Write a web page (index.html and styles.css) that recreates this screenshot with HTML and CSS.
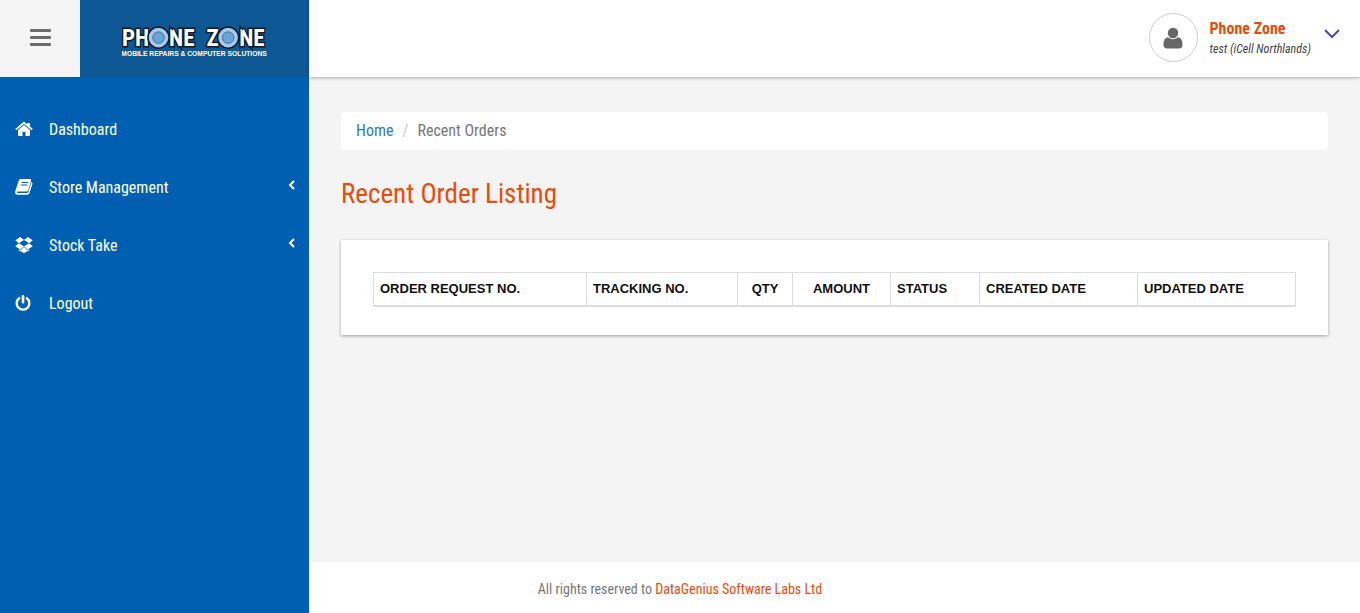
FILE: index.html
```html
<!DOCTYPE html>
<html lang="en">
<head>
<meta charset="utf-8">
<meta name="viewport" content="width=device-width, initial-scale=1">
<title>Recent Orders</title>
<link rel="stylesheet" href="styles.css">
</head>
<body>
<div class="app">
  <aside class="sidebar">
    <div class="brand">
      <button class="menu-toggle" type="button" aria-label="Toggle menu">
        <svg width="22" height="18" viewBox="0 0 22 18" fill="#6b6b6b"><rect width="21" height="3" rx="1" x="1" y="0"/><rect width="21" height="3" rx="1" x="1" y="7"/><rect width="21" height="3" rx="1" x="1" y="14"/></svg>
      </button>
      <a class="logo" href="#" aria-label="Phone Zone">
        <svg width="146" height="35" viewBox="0 0 152 36">
          <g class="logo-name">
            <text x="0" y="24">PH</text><text x="49" y="24">NE</text>
            <text x="88" y="24">Z</text><text x="122" y="24">NE</text>
          </g>
          <path d="m49 2 4 5M60 24l3 4M122 2l4 5M133 24l3 4" fill="none" stroke="#0b1a2a" stroke-width="1.500"/>
          <g fill="#a4caee" stroke="#0b1a2a" stroke-width="1.500">
            <circle cx="38" cy="15" r="11"/><circle cx="110.500" cy="15" r="11"/>
          </g>
          <g fill="#6ba3d6" stroke="#3c6f9f">
            <circle cx="38" cy="15" r="6"/><circle cx="110.500" cy="15" r="6"/>
          </g>
          <text class="logo-tag" x="75" y="34">MOBILE REPAIRS &amp; COMPUTER SOLUTIONS</text>
        </svg>
      </a>
    </div>
    <nav class="nav">
      <a href="#">
        <svg class="icon" viewBox="0 0 18 16" fill="#fff"><path d="M9 4 3 9v5q0 1 1 1h3.500v-4h3v4H14q1 0 1-1V9z"/><path d="m9 .6 3 2.500V2h3v3.600l2.800 2.400-1.100 1.300L9 3.100 1.300 9.300.2 8z"/></svg>
        <span>Dashboard</span>
      </a>
      <a href="#">
        <svg class="icon" viewBox="0 0 18 16"><path fill="#fff" fill-rule="evenodd" d="M6 0h9q1.500 0 1.100 1.500L13.300 11q-.4 1.500-2 1.500H3q-1.200 0-1.200.8.100.8 1.200.8h9q1 0 1.300-1L16.300 3q1.500.6 1.100 2L14.500 14q-.5 1.800-2.300 1.800H2.500Q0 15.800 0 13.500q0-.8.300-1.500L3.600 2Q4.200 0 6 0zm.8 3-.3 1h6.400l.3-1zM6 5.500l-.3 1h6.400l.3-1z"/></svg>
        <span>Store Management</span>
        <svg class="arrow" viewBox="0 0 8 12"><path d="M6 2 2 6l4 4"/></svg>
      </a>
      <a href="#">
        <svg class="icon" viewBox="0 0 18 16" fill="#fff"><path d="m5.300 0 3.700 3-5.200 3.300L.3 3.300zM12.700 0 9 3l5.200 3.300 3.500-3zM3.800 6.300.3 9.200l5 3.200L9 9.300zM14.200 6.300l3.500 2.900-5 3.200L9 9.300zM9 10.100l-3.700 3.100-1.600-1v1.200L9 16l5.300-2.600v-1.200l-1.600 1z"/></svg>
        <span>Stock Take</span>
        <svg class="arrow" viewBox="0 0 8 12"><path d="M6 2 2 6l4 4"/></svg>
      </a>
      <a href="#">
        <svg class="icon" viewBox="0 0 18 16" fill="none" stroke="#fff" stroke-linecap="round"><path stroke-width="2.400" d="M4.200 3.300a6.300 6.300 0 1 0 7.600 0"/><path stroke-width="2.600" d="M8 1.300V7.300"/></svg>
        <span>Logout</span>
      </a>
    </nav>
  </aside>

  <div class="page">
    <header class="topbar">
      <span class="avatar">
        <svg width="20" height="22" viewBox="0 0 20 22" fill="#666"><circle cx="10" cy="6" r="5.200"/><path d="M5 10.200q5 4 10 0 4.500.6 4.500 7.500 0 3.800-3.500 3.800H4q-3.500 0-3.500-3.800Q.5 10.800 5 10.200z"/></svg>
      </span>
      <div class="user">
        <strong>Phone Zone</strong>
        <em>test (iCell Northlands)</em>
      </div>
      <button class="user-menu" type="button" aria-label="Account menu">
        <svg width="16" height="10" viewBox="0 0 16 10" fill="none" stroke="#4f46b8" stroke-width="2"><path d="m1 1 7 7 7-7"/></svg>
      </button>
    </header>

    <main class="content">
      <nav class="breadcrumb" aria-label="Breadcrumb">
        <a href="#">Home</a><span class="slash">/</span><span>Recent Orders</span>
      </nav>
      <h1>Recent Order Listing</h1>
      <section class="card">
        <table class="orders">
          <colgroup><col class="c-order"><col class="c-track"><col class="c-qty"><col class="c-amount"><col class="c-status"><col class="c-date"><col class="c-date"></colgroup>
          <thead>
            <tr><th>ORDER REQUEST NO.</th><th>TRACKING NO.</th><th class="center">QTY</th><th class="center">AMOUNT</th><th>STATUS</th><th>CREATED DATE</th><th>UPDATED DATE</th></tr>
          </thead>
        </table>
      </section>
    </main>

    <footer class="footer">
      <p>All rights reserved to <a href="#">DataGenius Software Labs Ltd</a></p>
    </footer>
  </div>
</div>
</body>
</html>
```
FILE: styles.css
```css
* { box-sizing: border-box; }

body {
  margin: 0;
  background: #f4f4f4;
  color: #777;
  font: 16px/24px "Roboto Condensed", "Liberation Sans Narrow", Roboto, sans-serif;
}

a { color: inherit; text-decoration: none; }
button { border: 0; padding: 0; background: none; cursor: pointer; }
svg { display: block; }

.app { display: grid; grid-template-columns: 309px 1fr; min-height: 100vh; }

.sidebar { background: #005fb0; color: #fff; }
.brand { display: grid; grid-template-columns: 80px 1fr; height: 77px; }
.menu-toggle { display: grid; place-items: center; padding-bottom: 2px; background: #f5f5f5; }
.logo { display: grid; place-items: center; padding-top: 3px; background: #0e5896; }
.logo-name {
  font: bold 24px "Roboto Condensed", "Liberation Sans Narrow", sans-serif;
  fill: #fff;
  stroke: #0b1a2a;
  stroke-width: 3px;
  paint-order: stroke;
}
.logo-tag { font: bold 7px "Liberation Sans", sans-serif; fill: #fff; text-anchor: middle; }

.nav { display: flex; flex-direction: column; padding-top: 24px; }
.nav a { display: flex; align-items: center; gap: 16px; height: 58px; padding: 0 13px 0 15px; }
.icon { width: 18px; height: 16px; margin-bottom: 2px; }
.arrow { width: 8px; height: 12px; margin-left: auto; margin-bottom: 6px; fill: none; stroke: #fff; stroke-width: 2px; }

.page { display: flex; flex-direction: column; min-width: 0; }
.topbar {
  display: flex;
  align-items: center;
  justify-content: flex-end;
  height: 77px;
  padding: 0 20px 2px 0;
  background: #fff;
  box-shadow: 0 1px 3px rgba(0, 0, 0, .3);
}
.avatar {
  display: grid;
  place-items: center;
  width: 49px;
  height: 49px;
  margin-right: 12px;
  border: 1px solid #ccc;
  border-radius: 50%;
}
.user { display: flex; flex-direction: column; padding-top: 2px; line-height: 20px; }
.user strong { color: #e84c0d; }
.user em { color: #444; font-size: 12px; }
.user-menu { margin: 0 0 8px 13px; }

.content { flex: 1; padding: 35px 32px; }
.breadcrumb { display: flex; gap: 9px; padding: 7px 15px; border-radius: 4px; background: #fff; }
.breadcrumb a { color: #337ab7; }
.slash { color: #ccc; }
h1 { margin: 26px 0 28px; color: #e84c0d; font-size: 27px; line-height: 36px; font-weight: 400; }
.card { padding: 32px 32px 28px; background: #fff; box-shadow: 0 1px 3px rgba(0, 0, 0, .35); }
.orders { width: 100%; table-layout: fixed; border-collapse: collapse; }
.orders th {
  padding: 5px 6px;
  border: 1px solid #ddd;
  border-bottom-width: 2px;
  color: #111;
  font: bold 13px/22px "Liberation Sans", Arial, sans-serif;
  text-align: left;
  white-space: nowrap;
}
.orders .center { text-align: center; }
.c-order { width: 213px; }
.c-track { width: 151px; }
.c-qty { width: 55px; }
.c-amount { width: 98px; }
.c-status { width: 89px; }

.footer { padding: 17px 309px 14px 0; background: #fff; text-align: center; font-size: 14px; line-height: 20px; }
.footer p { margin: 0; }
.footer a { color: #e84c0d; }
```
